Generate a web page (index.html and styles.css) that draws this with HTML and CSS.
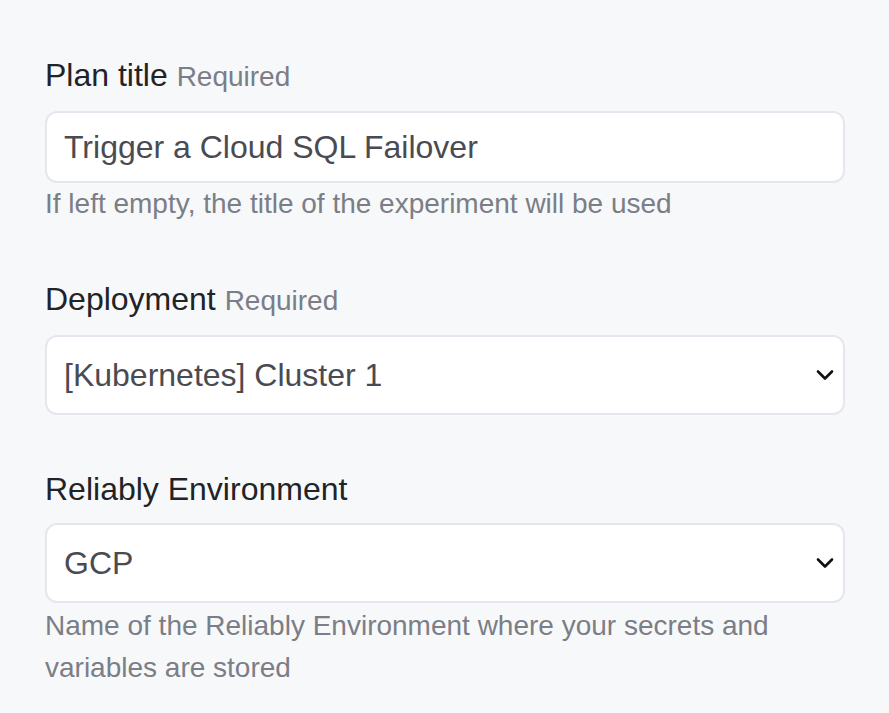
FILE: index.html
```html
<!DOCTYPE html>
<html lang="en">
<head>
<meta charset="utf-8">
<title>Plan form</title>
<link rel="stylesheet" href="styles.css">
</head>
<body>
<form class="form">
  <div class="group">
    <label class="label" for="title">Plan title <span class="req">Required</span></label>
    <input class="control" id="title" type="text" value="Trigger a Cloud SQL Failover">
    <div class="help">If left empty, the title of the experiment will be used</div>
  </div>
  <div class="group">
    <label class="label" for="deploy">Deployment <span class="req">Required</span></label>
    <div class="select-wrap">
      <select class="control select" id="deploy"><option>[Kubernetes] Cluster 1</option></select>
      <svg class="chev" width="18" height="12" viewBox="0 0 18 12"><path d="M2 2.5l7 7 7-7" fill="none" stroke="#111" stroke-width="2.6" stroke-linecap="round" stroke-linejoin="round"/></svg>
    </div>
  </div>
  <div class="group">
    <label class="label" for="env">Reliably Environment</label>
    <div class="select-wrap">
      <select class="control select" id="env"><option>GCP</option></select>
      <svg class="chev" width="18" height="12" viewBox="0 0 18 12"><path d="M2 2.5l7 7 7-7" fill="none" stroke="#111" stroke-width="2.6" stroke-linecap="round" stroke-linejoin="round"/></svg>
    </div>
    <div class="help help-last">Name of the Reliably Environment where your secrets and variables are stored</div>
  </div>
</form>
</body>
</html>
```

FILE: styles.css
```css
html, body {
  margin: 0;
  padding: 0;
  background: #f7f8fa;
}
body {
  font-family: "Liberation Sans", Arial, sans-serif;
  color: #222428;
}
.form {
  width: 800px;
  padding: 52px 0 0 45px;
  display: flex;
  flex-direction: column;
  gap: 51px;
}
.group {
  display: flex;
  flex-direction: column;
}
.label {
  display: block;
  font-size: 32px;
  line-height: 46px;
  margin-bottom: 11px;
  color: #212327;
}
.req {
  font-size: 28px;
  color: #7b7e86;
}
.control {
  display: block;
  box-sizing: border-box;
  width: 800px;
  height: 72px;
  margin: 0;
  padding: 0 17px;
  border: 2px solid #e6e6ef;
  border-radius: 12px;
  background: #fff;
  font-family: "Liberation Sans", Arial, sans-serif;
  font-size: 32px;
  color: #4a4b52;
  outline: none;
}
.select {
  height: 80px;
  appearance: none;
  -webkit-appearance: none;
  padding-right: 50px;
}
.select-wrap {
  position: relative;
}
.chev {
  position: absolute;
  right: 11px;
  top: 34px;
}
.help {
  font-size: 28px;
  line-height: 42px;
  color: #7b7e86;
}
.help-last {
  margin-top: 2px;
}
```
